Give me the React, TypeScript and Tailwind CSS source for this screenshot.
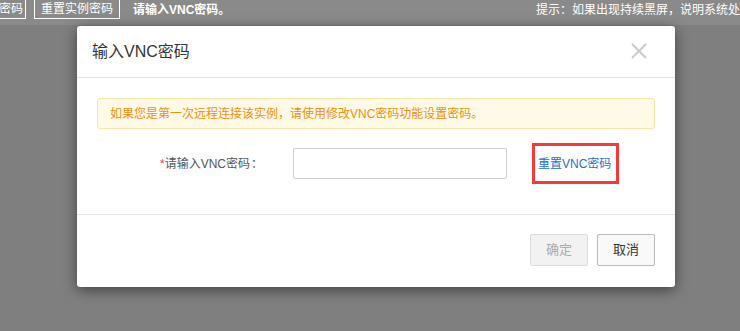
import React from "react";

const font = { fontFamily: '"Liberation Sans", "Noto Sans CJK SC", sans-serif' };

export default function App() {
  return (
    <div
      className="relative w-[740px] h-[331px] overflow-hidden bg-[#7f7f7f] text-[12px]"
      style={font}
    >
      {/* top bar */}
      <div className="flex items-start h-[25px] bg-[#8a8a8a] text-white whitespace-nowrap">
        <div className="flex items-center h-[20px] w-[26px] border-r border-b border-white overflow-hidden justify-end pr-[2px] -mt-[1px]">
          <span className="leading-none">密码</span>
        </div>
        <div className="ml-[8px] flex items-center h-[20px] px-[6px] border border-t-0 border-white -mt-[1px]">
          <span className="leading-none">重置实例密码</span>
        </div>
        <div className="ml-[13px] h-[19px] flex items-center font-bold leading-none">
          请输入VNC密码。
        </div>
        <div className="ml-auto h-[19px] flex items-center leading-none">
          提示：如果出现持续黑屏，说明系统处
        </div>
      </div>

      {/* modal */}
      <div className="absolute left-[77px] top-[26px] w-[598px] h-[261px] bg-white rounded-[3px] shadow-[0_3px_14px_rgba(0,0,0,0.5)] flex flex-col">
        <div className="h-[52px] flex items-center justify-between pl-[15px] pr-[28px] border-b border-[#e5e5e5]">
          <span className="text-[16px] text-[#333]">输入VNC密码</span>
          <svg width="16" height="16" viewBox="0 0 16 16" className="mt-[-1px]">
            <path d="M1 1 L15 15 M15 1 L1 15" stroke="#c9c9c9" strokeWidth="1.8" />
          </svg>
        </div>
        <div className="h-[137px] px-[20px] pt-[20px] border-b border-[#e5e5e5]">
          <div className="h-[31px] flex items-center px-[12px] bg-[#fffae8] border border-[#fbe3a6] rounded-[3px] text-[#f0900c]">
            如果您是第一次远程连接该实例，请使用修改VNC密码功能设置密码。
          </div>
          <div className="mt-[14px] flex items-center">
            <div className="w-[166px] text-right text-[#555]">
              <span className="text-[#f04040]">*</span>请输入VNC密码<span className="ml-[1px]">：</span>
            </div>
            <div className="ml-[30px] w-[214px] h-[31px] border border-[#cfcfcf] rounded-[2px]" />
            <div className="ml-[25px] w-[87px] h-[41px] border-[3px] border-[#f53a3a] flex items-center pl-[3px] text-[#2671c4]">
              重置VNC密码
            </div>
          </div>
        </div>
        <div className="flex-1 flex justify-end items-start pt-[19px] pr-[20px] gap-[9px]">
          <div className="w-[58px] h-[32px] flex items-center justify-center border border-[#dcdcdc] bg-[#f2f2f2] text-[#aaa] rounded-[2px] text-[13px]">
            确定
          </div>
          <div className="w-[58px] h-[32px] flex items-center justify-center border border-[#bbb] bg-[#f9f9f9] text-[#333] rounded-[2px] text-[13px]">
            取消
          </div>
        </div>
      </div>
    </div>
  );
}
